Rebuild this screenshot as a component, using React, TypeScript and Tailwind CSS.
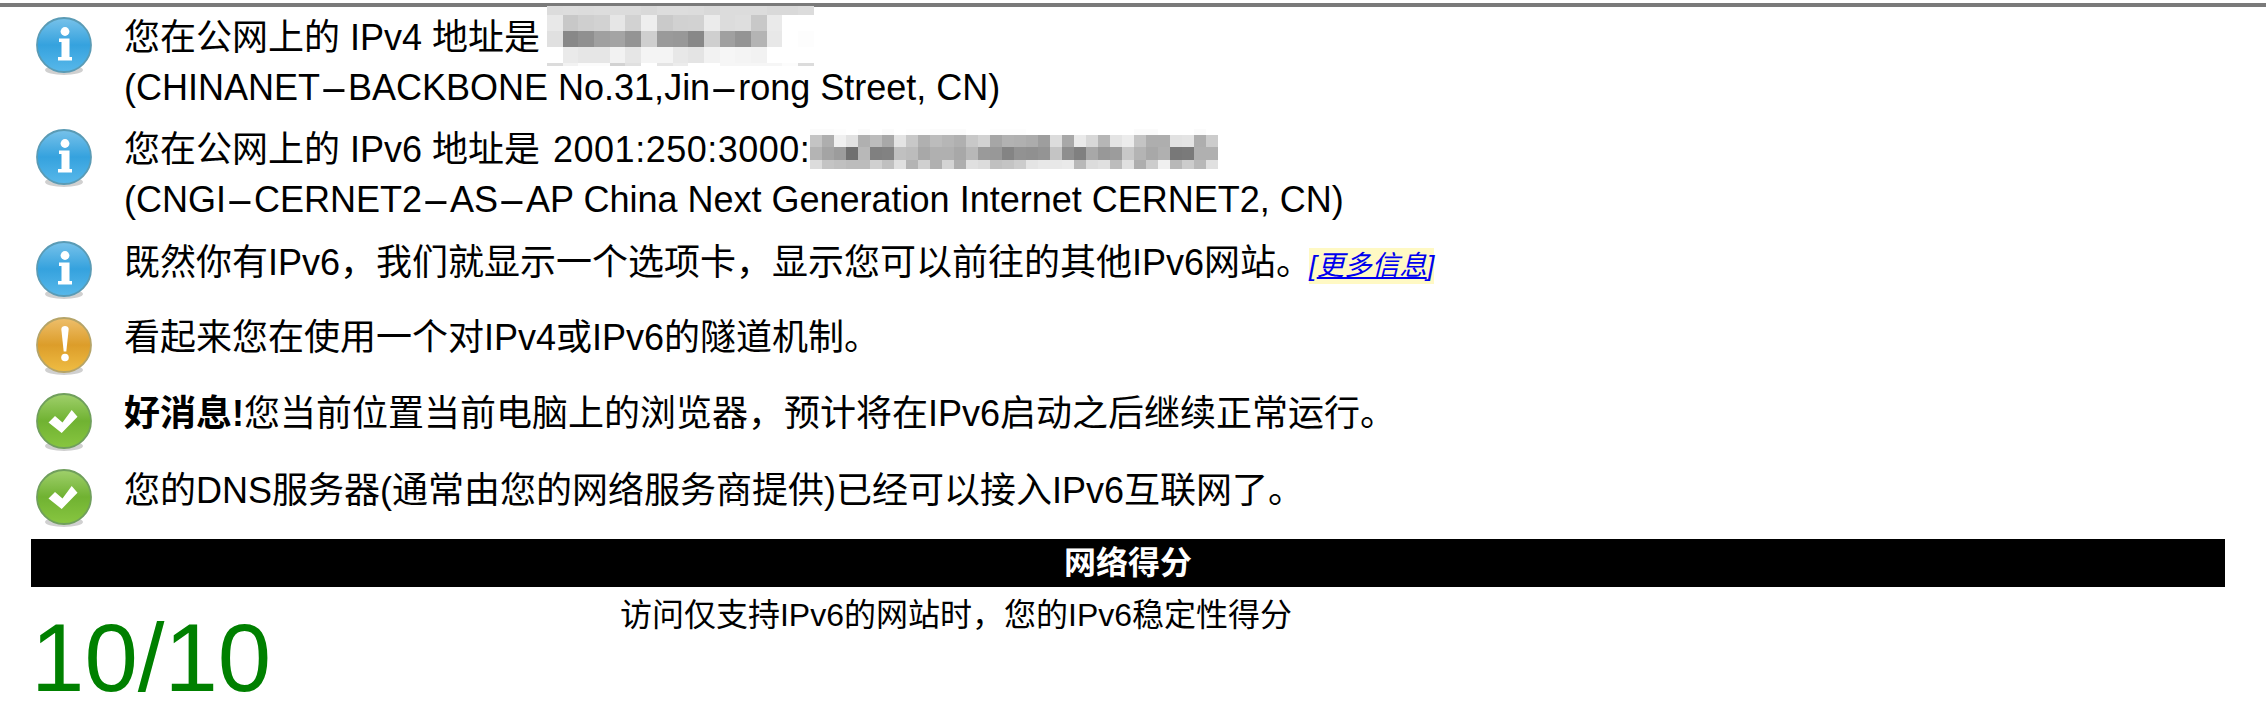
const MOSAIC_V4 = [
  ["dc", "dd", "dc", "dd", "dc", "dc", "d9", "dd", "dd", "dc", "d9", "dc", "dc", "dc", "d9", "d9", "dc"],
  ["e8", "c8", "cf", "d2", "e6", "d2", "ee", "ca", "d1", "d2", "eb", "dc", "de", "c8", "ea", "ff", "ff"],
  ["e0", "88", "90", "a0", "a4", "94", "cf", "9a", "98", "88", "cf", "a0", "94", "b4", "e8", "ff", "fd"],
  ["ff", "ea", "e6", "e6", "f2", "e6", "f4", "f4", "e8", "e4", "f2", "f6", "f4", "f2", "ff", "ff", "ff"],
  ["dc", "f2", "fb", "fb", "d2", "e0", "ff", "e4", "ec", "ff", "ff", "f6", "f6", "f6", "f6", "fc", "dc"],
];

const MOSAIC_V6 = [
  ["fb", "fb", "fd", "ff", "fb", "ff", "fb", "ff", "fd", "fd", "fb", "fb", "fb", "ff", "ff", "fd", "fd", "fd", "ff", "ff", "ff", "ff", "ff", "ff", "ff", "ff", "ff", "fb", "fb", "ff", "ff", "ff", "fb", "ff"],
  ["c4", "ae", "f0", "e2", "b0", "bc", "a8", "e4", "c8", "b0", "bc", "b6", "b0", "c8", "d2", "a6", "b2", "b0", "ac", "9e", "dc", "a8", "ea", "d8", "b6", "e4", "ec", "c4", "ae", "ae", "e2", "e4", "ae", "cc"],
  ["b4", "a4", "9c", "70", "b8", "80", "82", "c0", "bc", "a8", "b0", "b0", "a8", "b8", "9a", "98", "84", "92", "90", "94", "c4", "8e", "80", "a8", "98", "9c", "c8", "b4", "a8", "b0", "78", "7a", "b0", "b0"],
  ["dc", "c4", "c0", "bc", "bc", "d0", "c0", "e0", "b4", "d0", "b0", "d4", "ae", "e0", "dc", "c0", "c4", "cc", "e4", "e8", "e8", "ea", "b8", "dc", "e0", "bc", "e0", "ae", "cc", "f0", "b8", "cc", "b8", "e0"],
];

function Mosaic({ rows, cell, heights, className }: { rows: string[][]; cell: number; heights: number[]; className: string }) {
  const width = rows[0].length * cell;
  const height = heights.reduce((a, b) => a + b, 0);
  let y = 0;
  return (
    <svg width={width} height={height} viewBox={`0 0 ${width} ${height}`} className={className} shapeRendering="crispEdges">
      {rows.map((row, r) => {
        const top = y;
        y += heights[r];
        return row.map((c, i) => (
          <rect key={`${r}-${i}`} x={i * cell} y={top} width={cell + 0.5} height={heights[r]} fill={`#${c}${c}${c}`} />
        ));
      })}
    </svg>
  );
}

type IconKind = "info" | "warn" | "ok";

const ICON_COLORS: Record<IconKind, { top: string; mid: string; bottom: string; rim: string }> = {
  info: { top: "#78c2ea", mid: "#35a2de", bottom: "#58b8ea", rim: "#5a9bb5" },
  warn: { top: "#eebf6c", mid: "#dc9d2a", bottom: "#efbd44", rim: "#b5a468" },
  ok: { top: "#a0d06c", mid: "#70b232", bottom: "#88c640", rim: "#709f5c" },
};

function StatusIcon({ kind }: { kind: IconKind }) {
  const c = ICON_COLORS[kind];
  return (
    <svg width="58" height="60" viewBox="0 0 58 60" className="mt-[4px] shrink-0">
      <defs>
        <linearGradient id={`fill-${kind}`} x1="0" y1="0" x2="0" y2="1">
          <stop offset="0" stopColor={c.top} />
          <stop offset="0.5" stopColor={c.mid} />
          <stop offset="1" stopColor={c.bottom} />
        </linearGradient>
        <filter id={`soft-${kind}`} x="-20%" y="-20%" width="140%" height="140%">
          <feGaussianBlur stdDeviation="0.7" />
        </filter>
      </defs>
      <ellipse cx="29" cy="53" rx="19" ry="5" fill="#000" opacity="0.18" filter={`url(#soft-${kind})`} />
      <circle cx="29" cy="28" r="27" fill={`url(#fill-${kind})`} stroke={c.rim} strokeWidth="1.8" />
      <g filter={`url(#soft-${kind})`} fill="#fff">
        {kind === "info" && (
          <>
            <circle cx="30" cy="14.5" r="4.4" />
            <path d="M24 21.5h10.5v18.5h2.5v3.5h-14v-3.5h3.5v-15h-2.5z" />
          </>
        )}
        {kind === "warn" && (
          <>
            <path d="M26.3 12c0-4 7.4-4 7.4 0l-2.4 22.5h-2.6z" />
            <circle cx="30" cy="40.5" r="3.8" />
          </>
        )}
        {kind === "ok" && <path d="M13.5 29.5L20 23l7.5 6.5L36.7 17l5.8 6.7L26.7 40z" />}
      </g>
    </svg>
  );
}

// the dashes in the reference come out much wider than a normal hyphen
function Dash() {
  return <span className="inline-block w-[28px] scale-x-[2.4] text-center">-</span>;
}

export default function App() {
  return (
    <div
      className="h-[726px] w-[2266px] overflow-hidden bg-white pt-[3px] text-black"
      style={{ fontFamily: '"Liberation Sans", "Noto Sans CJK SC", sans-serif' }}
    >
      <div className="h-[4px] bg-[#7a7a7a]" />
      <div className="pt-[6px] text-[36px] leading-[50px]">
        <div className="flex h-[112px] gap-[31px] pl-[35px]">
          <StatusIcon kind="info" />
          <div>
            您在公网上的 IPv4 地址是{" "}
            <Mosaic
              rows={MOSAIC_V4}
              cell={15.7}
              heights={[9, 16, 16, 16, 3]}
              className="-my-[10px] -ml-[3px] inline-block align-[-6px]"
            />
            <br />
            (CHINANET
            <Dash />
            BACKBONE No.31,Jin
            <Dash />
            rong Street, CN)
          </div>
        </div>
        <div className="flex h-[112px] gap-[31px] pl-[35px]">
          <StatusIcon kind="info" />
          <div>
            您在公网上的 IPv6 地址是 <span className="ml-[3px] tracking-[0.5px]">2001:250:3000:</span>
            <Mosaic
              rows={MOSAIC_V6}
              cell={12}
              heights={[6, 12, 13, 9]}
              className="-my-[5px] inline-block align-[-2px]"
            />
            <br />
            (CNGI
            <Dash />
            CERNET2
            <Dash />
            AS
            <Dash />
            AP China Next Generation Internet CERNET2, CN)
          </div>
        </div>
        <div className="flex h-[76px] gap-[31px] pl-[35px]">
          <StatusIcon kind="info" />
          <div className="pt-[1px]">
            既然你有IPv6，我们就显示一个选项卡，显示您可以前往的其他IPv6网站。
            <a href="#" className="-ml-[3px] inline-block bg-[#fff9c4] text-[27.5px] leading-[36px] text-[#0000ee] italic">
              [<span className="underline">更多信息</span>]
            </a>
          </div>
        </div>
        <div className="flex h-[76px] gap-[31px] pl-[35px]">
          <StatusIcon kind="warn" />
          <div>看起来您在使用一个对IPv4或IPv6的隧道机制。</div>
        </div>
        <div className="flex h-[76px] gap-[31px] pl-[35px]">
          <StatusIcon kind="ok" />
          <div>
            <b>好消息!</b>您当前位置当前电脑上的浏览器，预计将在IPv6启动之后继续正常运行。
          </div>
        </div>
        <div className="flex h-[74px] gap-[31px] pl-[35px]">
          <StatusIcon kind="ok" />
          <div className="pt-[1px]">您的DNS服务器(通常由您的网络服务商提供)已经可以接入IPv6互联网了。</div>
        </div>
      </div>
      <div className="ml-[31px] h-[48px] w-[2194px] bg-black text-center text-[32px] leading-[48px] font-bold text-white">
        网络得分
      </div>
      <div className="ml-[31px] grid grid-cols-[300px_1250px]">
        <div className="pt-[16px] text-[96px] leading-[110px] text-[#008000]">10/10</div>
        <div className="pt-[8px] text-center text-[32px] leading-[40px]">访问仅支持IPv6的网站时，您的IPv6稳定性得分</div>
      </div>
    </div>
  );
}
